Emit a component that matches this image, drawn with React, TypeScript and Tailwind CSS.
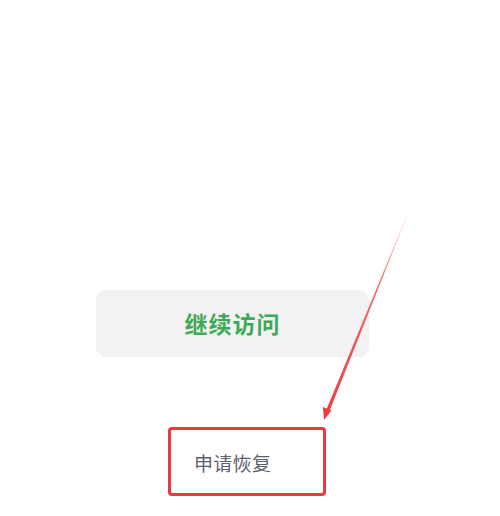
import React from "react";

export default function App() {
  return (
    <div className="relative w-[500px] h-[516px] bg-white overflow-hidden" style={{ fontFamily: '"Noto Sans CJK SC", "Noto Sans", sans-serif' }}>
      <div className="flex flex-col pt-[290px] pl-[96px]">
        <div className="w-[273px] h-[67px] rounded-[10px] bg-[#f2f2f2] flex items-center justify-center">
          <span className="text-[23px] font-bold text-[#3fa95a] tracking-[1px]">继续访问</span>
        </div>
        <div className="mt-[70px] ml-[72px] w-[158px] h-[69px] border-[3px] border-[#ea3a3f] rounded-[4px] flex items-center pl-[23px]">
          <span className="text-[19px] text-[#5b6172] mt-[4px] tracking-[0.3px]">申请恢复</span>
        </div>
      </div>
      <svg className="absolute left-0 top-0" width="500" height="516" viewBox="0 0 500 516">
        <defs>
          <linearGradient id="g" x1="410" y1="208" x2="326" y2="418" gradientUnits="userSpaceOnUse">
            <stop offset="0" stopColor="#ee3b40" stopOpacity="0.05" />
            <stop offset="0.35" stopColor="#ee3b40" stopOpacity="0.75" />
            <stop offset="1" stopColor="#ee3b40" stopOpacity="1" />
          </linearGradient>
        </defs>
        <polygon points="410.3,208 409.9,208 325,413 328.2,414.3" fill="url(#g)" />
        <polygon points="324,420 323,407 331.5,410.5" fill="#ee3b40" />
      </svg>
    </div>
  );
}
